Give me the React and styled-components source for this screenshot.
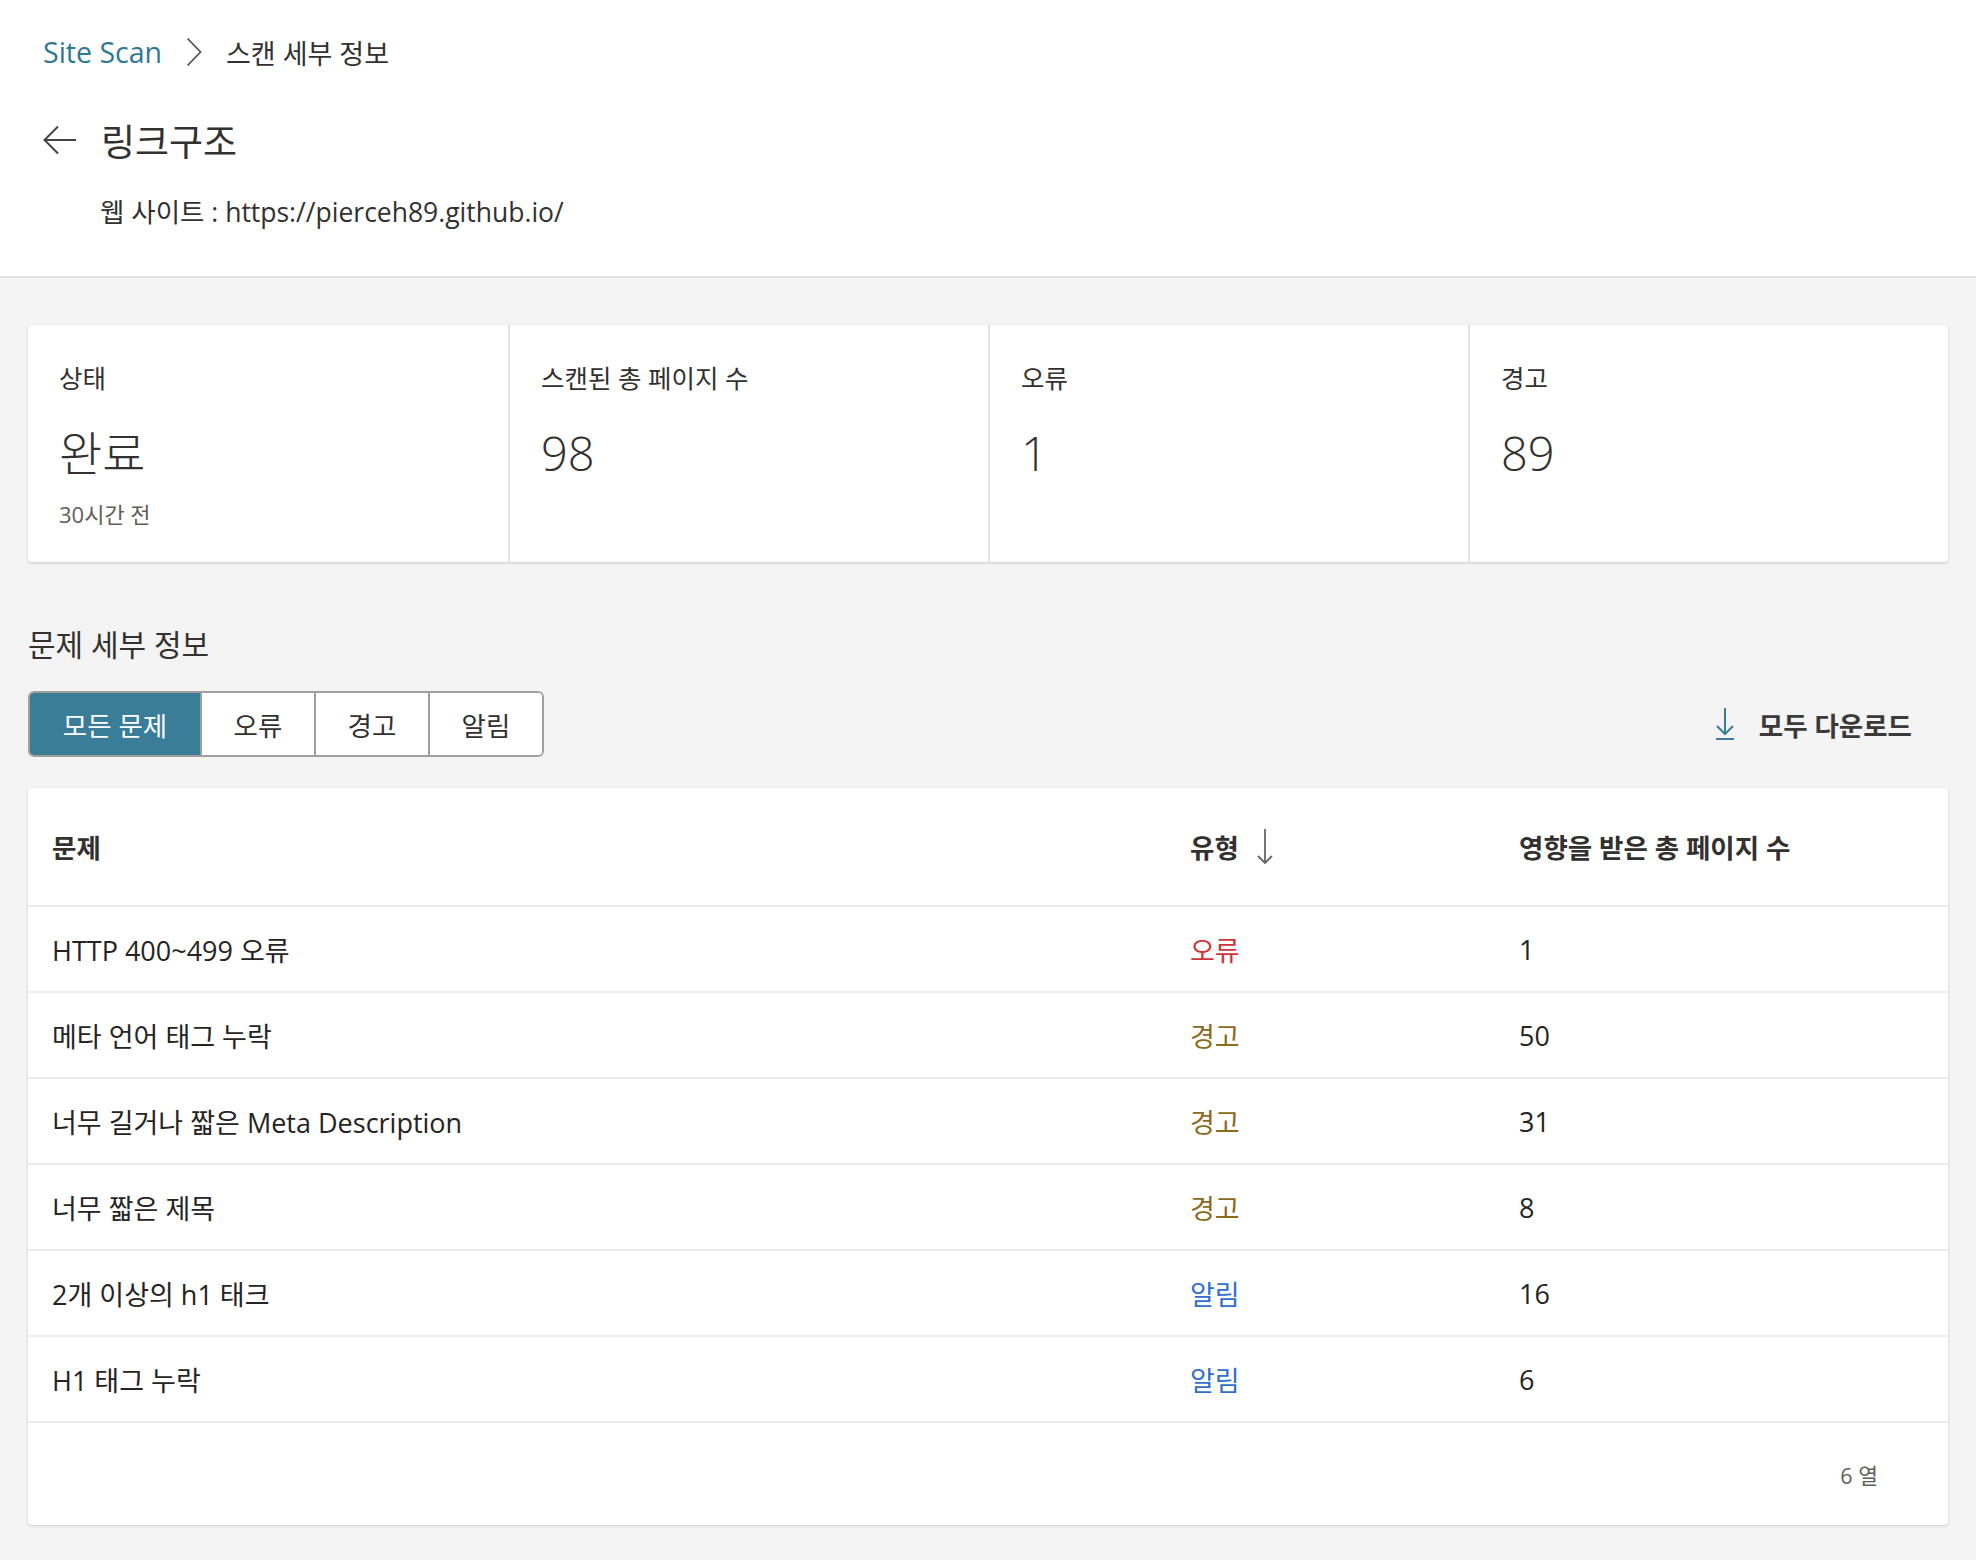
import React from 'react';
import styled, { createGlobalStyle } from 'styled-components';

const GlobalStyle = createGlobalStyle`
  html, body {
    margin: 0;
    padding: 0;
    background: #f4f4f4;
  }
  body {
    font-family: "Open Sans", "Noto Sans CJK KR", sans-serif;
    color: #323130;
  }
  * {
    box-sizing: border-box;
  }
`;

const stats = [
  { label: '상태', value: '완료', sub: '30시간 전' },
  { label: '스캔된 총 페이지 수', value: '98' },
  { label: '오류', value: '1' },
  { label: '경고', value: '89' },
];

const tabs = ['모든 문제', '오류', '경고', '알림'];

const issues = [
  { name: 'HTTP 400~499 오류', kind: 'error', count: 1 },
  { name: '메타 언어 태그 누락', kind: 'warning', count: 50 },
  { name: '너무 길거나 짧은 Meta Description', kind: 'warning', count: 31 },
  { name: '너무 짧은 제목', kind: 'warning', count: 8 },
  { name: '2개 이상의 h1 태크', kind: 'info', count: 16 },
  { name: 'H1 태그 누락', kind: 'info', count: 6 },
];

const kindLabel = { error: '오류', warning: '경고', info: '알림' };
const kindColor = { error: '#d13438', warning: '#8a6a1c', info: '#2f6fd0' };

const BackArrow = () => (
  <svg width="34" height="30" viewBox="0 0 34 30" fill="none">
    <path d="M33 15H2M15 1.5L1.5 15L15 28.5" stroke="#444" strokeWidth="2" />
  </svg>
);

const Chevron = () => (
  <svg width="16" height="30" viewBox="0 0 16 30" fill="none">
    <path d="M1.5 1.5L14.5 15L1.5 28.5" stroke="#555" strokeWidth="1.8" />
  </svg>
);

const SortArrow = () => (
  <svg width="16" height="36" viewBox="0 0 16 36" fill="none">
    <path d="M8 0V34M1 27L8 34L15 27" stroke="#666" strokeWidth="1.8" />
  </svg>
);

const DownloadIcon = () => (
  <svg width="20" height="32" viewBox="0 0 20 32" fill="none">
    <path d="M10 0V26M2 18L10 26L18 18M1 31H19" stroke="#3a7d99" strokeWidth="2" />
  </svg>
);

const App = () => (
  <>
    <GlobalStyle />
    <Header>
      <Breadcrumb>
        <Crumb>Site Scan</Crumb>
        <Chevron />
        <Current>스캔 세부 정보</Current>
      </Breadcrumb>
      <TitleRow>
        <BackButton>
          <BackArrow />
        </BackButton>
        <Title>링크구조</Title>
      </TitleRow>
      <SiteLine>웹 사이트 : https://pierceh89.github.io/</SiteLine>
    </Header>

    <Main>
      <StatsCard>
        {stats.map((s) => (
          <StatCell key={s.label}>
            <StatLabel>{s.label}</StatLabel>
            <StatValue>{s.value}</StatValue>
            {s.sub && <StatSub>{s.sub}</StatSub>}
          </StatCell>
        ))}
      </StatsCard>

      <SectionTitle>문제 세부 정보</SectionTitle>

      <Toolbar>
        <TabGroup>
          {tabs.map((t, i) => (
            <Tab key={t} active={i === 0} wide={i === 0}>
              {t}
            </Tab>
          ))}
        </TabGroup>
        <DownloadButton>
          <DownloadIcon />
          모두 다운로드
        </DownloadButton>
      </Toolbar>

      <TableCard>
        <HeadRow>
          <HeadCell>문제</HeadCell>
          <HeadCell>
            유형
            <SortArrow />
          </HeadCell>
          <HeadCell>영향을 받은 총 페이지 수</HeadCell>
        </HeadRow>
        {issues.map((row) => (
          <Row key={row.name}>
            <Cell>{row.name}</Cell>
            <TypeCell kind={row.kind}>{kindLabel[row.kind]}</TypeCell>
            <Cell>{row.count}</Cell>
          </Row>
        ))}
        <TableFooter>6 열</TableFooter>
      </TableCard>
    </Main>
  </>
);

const Header = styled.header`
  background: #fff;
  border-bottom: 2px solid #e1e1e1;
  padding: 28px 43px 0;
  height: 278px;
`;

const Breadcrumb = styled.nav`
  display: flex;
  align-items: center;
  gap: 24px;
  height: 48px;
  font-size: 28.5px;
`;

const Crumb = styled.a`
  color: #2f7896;
  cursor: pointer;
`;

const Current = styled.span`
  color: #323130;
  font-size: 27px;
`;

const TitleRow = styled.div`
  display: flex;
  align-items: center;
  gap: 24px;
  margin-top: 40px;
  height: 48px;
`;

const BackButton = styled.button`
  border: none;
  background: none;
  padding: 0;
  display: flex;
  align-items: center;
  cursor: pointer;
`;

const Title = styled.h1`
  margin: 0;
  font-size: 37px;
  font-weight: 400;
  color: #323130;
`;

const SiteLine = styled.div`
  margin-top: 27px;
  padding-left: 57px;
  font-size: 26.5px;
  color: #323130;
`;

const Main = styled.main`
  padding: 47px 28px 34px;
`;

const StatsCard = styled.section`
  display: grid;
  grid-template-columns: repeat(4, 1fr);
  background: #fff;
  border-radius: 4px;
  box-shadow: 0 1px 3px rgba(0, 0, 0, 0.18);
  height: 237px;
`;

const StatCell = styled.div`
  padding: 36px 31px 0;
  border-left: 2px solid #e3e3e3;

  &:first-child {
    border-left: none;
  }
`;

const StatLabel = styled.div`
  font-size: 25.5px;
  color: #323130;
  line-height: 34px;
`;

const StatValue = styled.div`
  margin-top: 30px;
  font-size: 47px;
  font-weight: 300;
  line-height: 56px;
  color: #323130;
`;

const StatSub = styled.div`
  margin-top: 16px;
  font-size: 22px;
  color: #605e5c;
`;

const SectionTitle = styled.h2`
  margin: 66px 0 0;
  font-size: 30px;
  font-weight: 400;
  line-height: 34px;
  color: #323130;
`;

const Toolbar = styled.div`
  display: flex;
  align-items: center;
  justify-content: space-between;
  margin-top: 29px;
  padding-right: 36px;
`;

const TabGroup = styled.div`
  display: flex;
  border: 2px solid #a0a0a0;
  border-radius: 6px;
  overflow: hidden;
  height: 66px;
`;

const Tab = styled.button`
  width: ${({ wide }) => (wide ? '170px' : '114px')};
  border: none;
  border-left: 2px solid #a0a0a0;
  background: ${({ active }) => (active ? '#3a7d99' : '#fff')};
  color: ${({ active }) => (active ? '#fff' : '#323130')};
  font-family: inherit;
  font-size: 26.5px;
  cursor: pointer;

  &:first-child {
    border-left: none;
  }
`;

const DownloadButton = styled.button`
  display: flex;
  align-items: center;
  gap: 24px;
  border: none;
  background: none;
  font-family: inherit;
  font-size: 26.5px;
  font-weight: 600;
  color: #3b3a39;
  cursor: pointer;
  padding: 0;
`;

const TableCard = styled.section`
  margin-top: 31px;
  background: #fff;
  border-radius: 4px;
  box-shadow: 0 1px 3px rgba(0, 0, 0, 0.18);
`;

const gridCols = `
  display: grid;
  grid-template-columns: 1138px 329px 1fr;
  padding-left: 24px;
  align-items: center;
`;

const HeadRow = styled.div`
  ${gridCols}
  height: 119px;
  border-bottom: 2px solid #ececec;
`;

const HeadCell = styled.div`
  display: flex;
  align-items: center;
  gap: 18px;
  font-size: 26.5px;
  font-weight: 600;
  color: #323130;
`;

const Row = styled.div`
  ${gridCols}
  height: 86px;
  border-bottom: 2px solid #ececec;
`;

const Cell = styled.div`
  font-size: 27px;
  color: #252423;
`;

const TypeCell = styled(Cell)`
  color: ${({ kind }) => kindColor[kind]};
`;

const TableFooter = styled.div`
  height: 102px;
  display: flex;
  align-items: center;
  justify-content: flex-end;
  padding-right: 70px;
  font-size: 21.5px;
  color: #605e5c;
`;

export default App;
